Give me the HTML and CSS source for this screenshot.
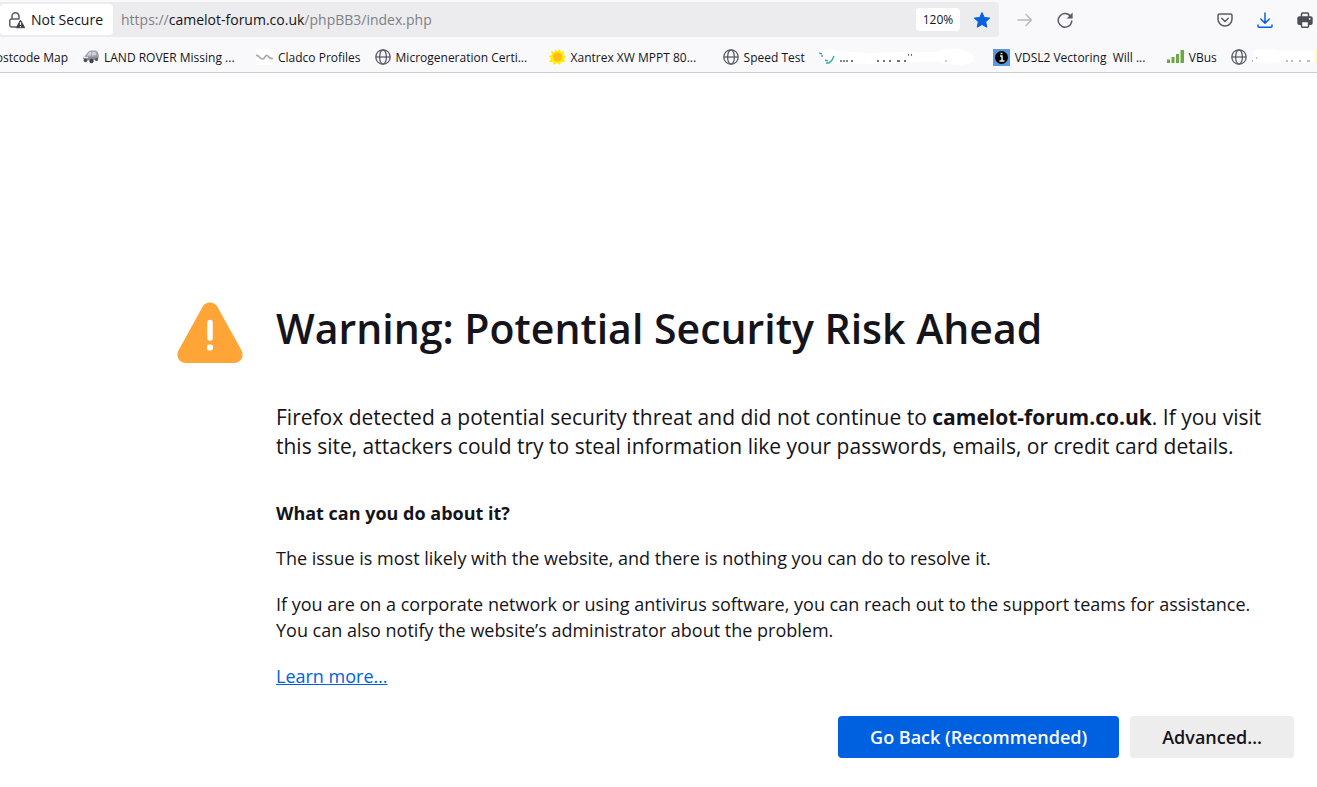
FILE: index.html
```html
<!DOCTYPE html>
<html lang="en">
<head>
<meta charset="utf-8">
<title>Warning: Potential Security Risk Ahead</title>
<link rel="stylesheet" href="styles.css">
</head>
<body>
<svg class="defs" aria-hidden="true">
  <symbol id="globe" viewBox="0 0 16 16"><g fill="none" stroke="#5b5b66" stroke-width="1.3"><circle cx="8" cy="8" r="7.2"/><ellipse cx="8" cy="8" rx="3.4" ry="7.2"/><path d="M1 8h14"/></g></symbol>
</svg>
<header class="chrome">
  <div class="toolbar">
    <div class="urlbar">
      <button class="identity" type="button">
        <svg width="18" height="18" viewBox="0 0 18 18"><path d="M4 8V5.3a3.5 3.5 0 0 1 7 0V8M8.500 16H3.500a1.700 1.700 0 0 1-1.700-1.700V9.700A1.700 1.700 0 0 1 3.500 8h8" fill="none" stroke="#5b5b66" stroke-width="1.500"/><path d="M12.500 9.200 16.700 16.700H8.300z" fill="#3f3f49" stroke="#3f3f49" stroke-linejoin="round"/><path d="M12.500 11.300v2.800M12.500 15v1.200" stroke="#fff" stroke-width="1.200"/></svg>
        <span>Not Secure</span>
      </button>
      <div class="url">https://<b>camelot-forum.co.uk</b>/phpBB3/index.php</div>
      <button class="zoom" type="button">120%</button>
      <button class="icon-button" type="button" aria-label="Edit bookmark"><svg width="18" height="18" viewBox="0 0 18 18"><path d="m9 1.500 2.300 5 5.400.6-4 3.700 1.100 5.400L9 13.500l-4.800 2.700 1.100-5.400-4-3.700 5.400-.6z" fill="#0561e1" stroke="#0561e1" stroke-linejoin="round"/></svg></button>
    </div>
    <button class="icon-button go" type="button" aria-label="Go"><svg width="16" height="16" viewBox="0 0 16 16"><path d="M1 8h13.500M9 2.500 14.500 8 9 13.500" fill="none" stroke="#b9b9be" stroke-width="1.400" stroke-linecap="round" stroke-linejoin="round"/></svg></button>
    <button class="icon-button reload" type="button" aria-label="Reload"><svg width="16" height="16" viewBox="0 0 16 16"><path d="M13.600 4.500A6.800 6.800 0 1 0 14.800 9" fill="none" stroke="#5b5b66" stroke-width="1.500" stroke-linecap="round"/><path d="M15.600.6v6H9.700z" fill="#5b5b66"/></svg></button>
    <div class="actions">
      <button class="icon-button" type="button" aria-label="Save to Pocket"><svg width="16" height="16" viewBox="0 0 16 16"><g fill="none" stroke="#5b5b66" stroke-width="1.500" stroke-linecap="round" stroke-linejoin="round"><path d="M2.500 2h11a1.500 1.500 0 0 1 1.500 1.500V7A7 7 0 0 1 1 7V3.500A1.500 1.500 0 0 1 2.500 2z"/><path d="M4.700 6.300 8 9.500l3.300-3.200"/></g></svg></button>
      <button class="icon-button" type="button" aria-label="Downloads"><svg width="16" height="16" viewBox="0 0 16 16"><path d="M8 1v10M3.800 7 8 11.200 12.200 7M1 13v1.200a1 1 0 0 0 1 1h12a1 1 0 0 0 1-1V13" fill="none" stroke="#0561e1" stroke-width="1.500" stroke-linecap="round" stroke-linejoin="round"/></svg></button>
      <button class="icon-button" type="button" aria-label="Print"><svg width="16" height="16" viewBox="0 0 16 16"><path d="M4.500 5V2a1 1 0 0 1 1-1h5a1 1 0 0 1 1 1v3" fill="none" stroke="#4d4d57" stroke-width="1.500"/><rect x=".3" y="4.300" width="15.400" height="8.700" rx="2" fill="#4d4d57"/><path d="M4.500 9.500h7v4.700a1 1 0 0 1-1 1h-5a1 1 0 0 1-1-1z" fill="#fff" stroke="#4d4d57" stroke-width="1.500"/><circle cx="12.700" cy="6.800" r=".9" fill="#fff"/></svg></button>
    </div>
  </div>
  <nav class="bookmarks" aria-label="Bookmarks">
    <a class="bookmark first" href="#"><span>ostcode Map</span></a>
    <a class="bookmark long" href="#"><svg width="17" height="16" viewBox="0 0 17 16"><path d="m1 10 2-3 3-4q1-1.500 3-1.500h4q2 0 3 2l1 3.500-1 4z" fill="#a2a2a8"/><path d="M5 6.500 7.500 3h2l-.5 3.500zM10.500 3h3l.5 3-4 .5z" fill="#d3d5ee"/><path d="m1 8.500 15-1v3.300l-14 1z" fill="#8b8b92"/><path d="M2 8.500h4" stroke="#eee"/><circle cx="3.500" cy="11.500" r="1.800" fill="#4d4d54"/><circle cx="9.500" cy="12" r="2.200" fill="#44444a"/><circle cx="14.500" cy="10.500" r="1.500" fill="#55555b"/></svg><span>LAND ROVER Missing ...</span></a>
    <a class="bookmark" href="#"><svg width="17" height="16" viewBox="0 0 17 16"><path d="M0 0h17v16H0z" fill="#fff"/><path d="M0 6.500c3-1 4 4 6.500 3.500C9 9.500 9 6 11 6.500s2 4 6 3" fill="none" stroke="#aaa" stroke-width="1.700"/></svg><span>Cladco Profiles</span></a>
    <a class="bookmark long" href="#"><svg width="16" height="16"><use href="#globe"/></svg><span>Microgeneration Certi...</span></a>
    <a class="bookmark long" href="#"><svg width="17" height="16" viewBox="0 0 17 16"><path d="m6 0 2 2 3-2 1 3 3-1-1 4 3 1-2 3 1 3-4 0-1 3-3-2-3 2-1-3-4 0 2-3-2-3 3-1-1-4 4 1z" fill="#ffec00"/><circle cx="8.500" cy="8" r="4.500" fill="#fdbd14"/></svg><span>Xantrex XW MPPT 80...</span></a>
    <a class="bookmark" href="#"><svg width="16" height="16"><use href="#globe"/></svg><span>Speed Test</span></a>
    <a class="bookmark long" href="#" aria-label="Hidden bookmark"><svg width="160" height="20" viewBox="0 0 160 20"><path d="M0 3Q8-1 18 4q26 3 68 1l5-2 5 2q22 1 28-2 14-4 24 2 10 2 6 10-6 4-28 2-6-3-26-2-24 2-51 2-10-1-21 0-18 0-23-4-6-5-5-11z" fill="#fff"/><path d="m0 6 3 1m-1 2h2m2 4 3 1m-2 2 3 0 3-3 2-4" fill="none" stroke="#3aada3" stroke-width="1.500"/><path d="M22 13v2m3-2v2m3-2v2m4-1h2m24 0h2m4 0h2m4 0h2m6 0h3m4 0h2m2-6h1m2 0h1m68 6h2" stroke="#33475b" stroke-width="1.300"/><path d="M126 14h2" stroke="#e08a55"/></svg></a>
    <a class="bookmark long" href="#"><svg width="17" height="17" viewBox="0 0 17 17"><path d="M0 0h17v17H0z" fill="#5b98dc"/><circle cx="8.500" cy="8.500" r="6.500" fill="#000"/><path d="M7 7h2v5M6.500 12h5M7.500 4.500h2" stroke="#e5eefa" stroke-width="1.500" fill="none"/></svg><span>VDSL2 Vectoring&nbsp; Will ...</span></a>
    <a class="bookmark" href="#"><svg width="17" height="16" viewBox="0 0 17 16"><path d="M0 10.500h3V14H0zM4.500 8h3v6h-3zM9 5h3v9H9zM13.500 1h3.500v13h-3.500z" fill="#69a842"/></svg><span>VBus</span></a>
    <a class="bookmark" href="#" aria-label="Hidden bookmark"><svg width="16" height="16"><use href="#globe"/></svg><svg width="70" height="16" viewBox="0 0 70 16"><path d="M2 1Q18-1 28 2q20 0 40-1v12q-22 2-38 0-14 3-26 0-4-5-2-12z" fill="#fff"/><path d="M0 12h1m3-3h1m29 3h2m3 0h2m6 0h2m6 0h3" stroke="#667da0"/><path d="M64 1v12" stroke="#ffffb0" stroke-width="2"/></svg></a>
  </nav>
</header>
<main class="page">
  <svg class="warning" width="66" height="62" viewBox="0 0 66 62"><path d="M25.500 5a8.500 8.500 0 0 1 15 0L64 47.500C68 54 64 61 57 61H9C2 61-2 54 2 47.500z" fill="#ffa436"/><path d="M33 20.500v15.500" stroke="#fff" stroke-width="5.500" stroke-linecap="round"/><rect x="30" y="42.500" width="6" height="6" rx="2" fill="#fff"/></svg>
  <div class="content">
    <h1>Warning: Potential Security Risk Ahead</h1>
    <p class="lead">Firefox detected a potential security threat and did not continue to <b>camelot-forum.co.uk</b>. If you visit<br>this site, attackers could try to steal information like your passwords, emails, or credit card details.</p>
    <h2>What can you do about it?</h2>
    <p>The issue is most likely with the website, and there is nothing you can do to resolve it.</p>
    <p>If you are on a corporate network or using antivirus software, you can reach out to the support teams for assistance.<br>You can also notify the website’s administrator about the problem.</p>
    <p><a class="learn" href="#">Learn more…</a></p>
    <div class="buttons">
      <button class="button primary" type="button">Go Back (Recommended)</button>
      <button class="button" type="button">Advanced…</button>
    </div>
  </div>
</main>
</body>
</html>
```
FILE: styles.css
```css
* { box-sizing: border-box; }
body {
  margin: 0;
  background: #fff;
  color: #15141a;
  font-family: "Open Sans", "Noto Sans", sans-serif;
  overflow-x: hidden;
}
button { border: 0; padding: 0; background: none; color: inherit; font: inherit; white-space: nowrap; }
svg { flex: none; display: block; }
.defs { display: none; }

.chrome { background: #f9f9fb; border-bottom: 1px solid #ccc; overflow: hidden; }
.toolbar { display: flex; align-items: center; padding-top: 2px; }
.urlbar {
  flex: 1;
  display: flex;
  align-items: center;
  height: 35px;
  background: #ececee;
  border-radius: 0 4px 4px 0;
  font-size: 14px;
}
.identity {
  display: flex;
  align-items: center;
  gap: 5px;
  width: 113px;
  height: 31px;
  padding-left: 8px;
  background: #fff;
  border-radius: 4px;
}
.url { flex: 1; padding-left: 8px; color: #808085; white-space: nowrap; }
.url b { color: #15141a; font-weight: 400; }
.zoom { width: 44px; height: 23px; background: #fff; border-radius: 4px; font-size: 12px; }
.icon-button { display: flex; align-items: center; justify-content: center; width: 40px; height: 32px; }
.urlbar .icon-button { width: 39px; padding-left: 4px; }
.go { margin-left: 6px; }
.actions { display: flex; margin-left: 120px; margin-right: -8px; }

.bookmarks { display: flex; align-items: center; gap: 14px; height: 35px; padding-top: 5px; font-size: 12px; }
.bookmark { flex: none; display: flex; align-items: center; gap: 5px; color: inherit; text-decoration: none; white-space: nowrap; }
.first { width: 68px; justify-content: flex-end; }
.long { width: 160px; }

.page { display: flex; gap: 33px; padding: 229px 23px 29px 177px; }
.content { flex: 1; min-width: 0; }
h1 { margin: 0 0 48px; font-size: 41px; font-weight: 600; line-height: 53px; white-space: nowrap; }
.lead { margin: 0 0 39px; font-size: 21px; line-height: 29px; white-space: nowrap; }
h2 { margin: 0 0 19px; font-size: 18px; font-weight: 700; line-height: 26px; }
p { margin: 0 0 20px; font-size: 18px; line-height: 26px; white-space: nowrap; }
.learn { color: #0061e0; text-decoration: underline; }
.buttons { display: flex; justify-content: flex-end; gap: 11px; margin-top: 27px; }
.button { height: 42px; padding: 0 32px; border-radius: 4px; background: #ededed; font-size: 18px; font-weight: 600; }
.primary { background: #0061e0; color: #fbfbfe; }
```
